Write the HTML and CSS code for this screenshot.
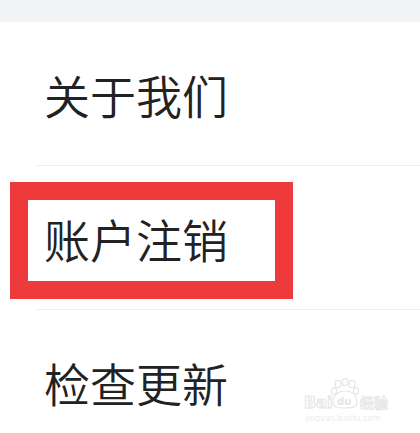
FILE: index.html
```html
<!DOCTYPE html>
<html lang="zh-CN">
<head>
<meta charset="utf-8">
<title>设置</title>
<link rel="stylesheet" href="styles.css">
</head>
<body>
<div class="page">
  <div class="topbar"></div>
  <div class="list">
    <div class="item"><span class="label">关于我们</span></div>
    <div class="item"><span class="label">账户注销</span></div>
    <div class="item last"><span class="label">检查更新</span></div>
    <div class="highlight"></div>
    <div class="watermark">
      <svg width="92" height="44" viewBox="0 0 92 44">
        <g fill="none" stroke="#e6e6e6" stroke-width="1.2">
          <ellipse cx="35" cy="6" rx="3" ry="3.6"/>
          <ellipse cx="42" cy="4" rx="3" ry="3.6"/>
          <ellipse cx="49" cy="6" rx="3" ry="3.6"/>
          <ellipse cx="53" cy="13" rx="2.6" ry="3.2"/>
          <ellipse cx="31" cy="13" rx="2.6" ry="3.2"/>
          <path d="M30 25 C30 16 36 13 42 13 C48 13 54 16 54 25 C54 29 50 30 42 30 C34 30 30 29 30 25 Z"/>
        </g>
        <text x="1" y="30" class="wm-big">Bai</text>
        <text x="34" y="27" class="wm-du">du</text>
        <text x="57" y="30" class="wm-cn">经验</text>
        <text x="2" y="43" class="wm-small">jingyan.baidu.com</text>
      </svg>
    </div>
  </div>
</div>
</body>
</html>
```
FILE: styles.css
```css
html, body {
  margin: 0;
  padding: 0;
  background: #ffffff;
}
.page {
  width: 420px;
  height: 433px;
  overflow: hidden;
  font-family: "Noto Sans CJK SC", "Noto Sans", sans-serif;
}
.topbar {
  height: 22px;
  background: #f3f4f6;
}
.list {
  position: relative;
}
.item {
  margin-left: 36px;
  padding-left: 8px;
  height: 143px;
  border-bottom: 1px solid #efefef;
  display: flex;
  align-items: center;
}
.item.last {
  border-bottom: none;
}
.label {
  font-size: 46px;
  font-weight: 350;
  line-height: 1;
  color: #222222;
}
.highlight {
  position: absolute;
  left: 10px;
  top: 160px;
  width: 283px;
  height: 117px;
  box-sizing: border-box;
  border: 18px solid #ee3a3a;
}
.watermark {
  position: absolute;
  left: 303px;
  top: 356px;
  width: 92px;
  height: 44px;
}
.watermark svg {
  display: block;
}
.wm-big {
  font-family: "DejaVu Sans", sans-serif;
  font-size: 16px;
  font-weight: bold;
  fill: none;
  stroke: #e4e4e4;
  stroke-width: 1;
}
.wm-du {
  font-family: "DejaVu Sans", sans-serif;
  font-size: 10px;
  font-weight: bold;
  fill: #e4e4e4;
}
.wm-cn {
  font-family: "Noto Sans CJK SC", sans-serif;
  font-size: 14px;
  font-weight: bold;
  fill: none;
  stroke: #e4e4e4;
  stroke-width: 0.8;
}
.wm-small {
  font-family: "DejaVu Sans", sans-serif;
  font-size: 8.2px;
  fill: #ededed;
}
```
